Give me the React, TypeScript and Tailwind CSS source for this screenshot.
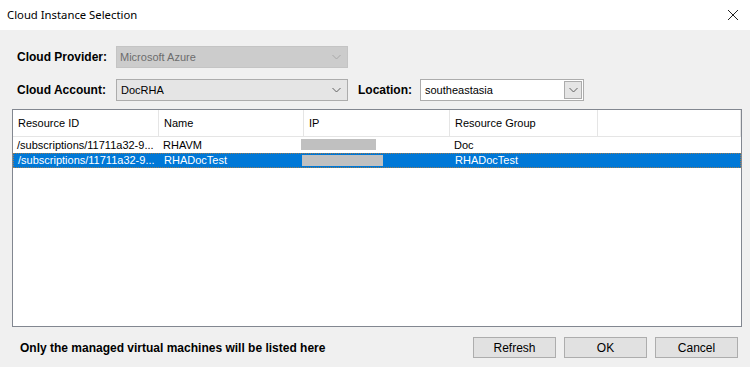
import React from 'react'

const font = { fontFamily: '"Liberation Sans", Arial, sans-serif' }

function Chevron({ color = '#606060' }: { color?: string }) {
  return (
    <svg width="9" height="6" viewBox="0 0 9 6">
      <path d="M0.5 1 L4.5 5 L8.5 1" fill="none" stroke={color} strokeWidth="1" />
    </svg>
  )
}

const columns = [
  { label: 'Resource ID', w: 'w-[146px]' },
  { label: 'Name', w: 'w-[145px]' },
  { label: 'IP', w: 'w-[146px]' },
  { label: 'Resource Group', w: 'w-[148px]' },
]

const rows = [
  { id: '/subscriptions/11711a32-9...', name: 'RHAVM', ip: 'w-[75px]', group: 'Doc', selected: false },
  { id: '/subscriptions/11711a32-9...', name: 'RHADocTest', ip: 'w-[81px]', group: 'RHADocTest', selected: true },
]

export default function App() {
  return (
    <div className="w-[750px] h-[367px] flex flex-col bg-[#f0f0f0] overflow-hidden" style={font}>
      {/* title bar */}
      <div className="h-[30px] bg-white flex items-center justify-between pl-[7px] pr-[11px] shrink-0">
        <span className="text-[11.3px] text-black" style={{ fontFamily: '"Noto Sans", "Open Sans", sans-serif' }}>
          Cloud Instance Selection
        </span>
        <svg width="12" height="12" viewBox="0 0 12 12">
          <path d="M1 1 L11 11 M11 1 L1 11" stroke="#222" strokeWidth="1" />
        </svg>
      </div>

      <div className="flex flex-col pt-[16px] text-[11px] text-black flex-1">
        {/* provider row */}
        <div className="flex items-center h-[22px]">
          <span className="w-[116px] shrink-0 pl-[17px] font-bold text-[12px] whitespace-nowrap">Cloud Provider:</span>
          <div className="w-[232px] h-[22px] bg-[#cccccc] border border-[#c4c4c4] flex items-center justify-between pl-[3px] pr-[6px] text-[#6d6d6d]">
            <span>Microsoft Azure</span>
            <Chevron color="#a8a8a8" />
          </div>
        </div>

        {/* account row */}
        <div className="flex items-center h-[22px] mt-[11px]">
          <span className="w-[116px] shrink-0 pl-[17px] font-bold text-[12px] whitespace-nowrap">Cloud Account:</span>
          <div className="w-[232px] h-[22px] bg-[#e5e5e5] border border-[#acacac] flex items-center justify-between pl-[4px] pr-[6px]">
            <span>DocRHA</span>
            <Chevron />
          </div>
          <span className="ml-[10px] w-[62px] shrink-0 font-bold text-[12px]">Location:</span>
          <div className="w-[164px] h-[22px] bg-white border border-[#acacac] flex items-center justify-between pl-[4px] pr-[1px]">
            <span>southeastasia</span>
            <div className="w-[18px] h-[18px] bg-[#e5e5e5] border border-[#acacac] flex items-center justify-center">
              <Chevron />
            </div>
          </div>
        </div>

        {/* list view */}
        <div className="ml-[12px] mr-[8px] mt-[8px] h-[218px] bg-white border border-[#828790] flex flex-col">
          <div className="flex h-[27px] border-b border-[#e5e5e5] shrink-0">
            {columns.map((c) => (
              <div key={c.label} className={`${c.w} border-r border-[#e5e5e5] flex items-center pl-[5px]`}>
                {c.label}
              </div>
            ))}
            <div className="flex-1 border-r border-[#e5e5e5]" />
          </div>
          {rows.map((r, i) => (
            <div
              key={i}
              className={`flex h-[15.5px] items-center ${
                r.selected ? 'bg-[#0078d7] text-white border border-dotted border-[#9a7a50]' : ''
              }`}
            >
              <div className="w-[146px] pl-[4px] whitespace-nowrap overflow-hidden">{r.id}</div>
              <div className="w-[145px] pl-[4px]">{r.name}</div>
              <div className="w-[146px] -ml-[3px]">
                <div className={`${r.ip} h-[11px] bg-[#c0c0c0]`} />
              </div>
              <div className="w-[148px] pl-[7px]">{r.group}</div>
            </div>
          ))}
        </div>

        {/* footer */}
        <div className="flex items-center justify-between pl-[20px] pr-[12px] mt-[10px]">
          <span className="font-bold text-[12px]">Only the managed virtual machines will be listed here</span>
          <div className="flex gap-[8px]">
            {['Refresh', 'OK', 'Cancel'].map((b) => (
              <button
                key={b}
                className="w-[83px] h-[21px] bg-[#e1e1e1] border border-[#adadad] text-[12px] text-black"
                style={font}
              >
                {b}
              </button>
            ))}
          </div>
        </div>
      </div>
    </div>
  )
}
